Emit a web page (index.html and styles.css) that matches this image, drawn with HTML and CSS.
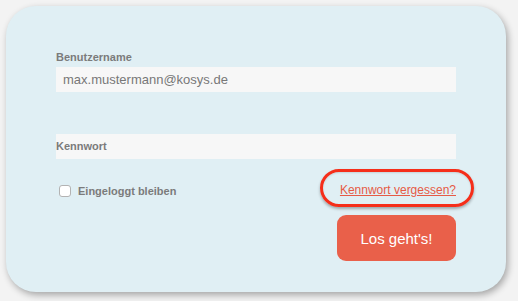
FILE: index.html
```html
<!DOCTYPE html>
<html lang="de">

<head>
    <meta charset="UTF-8">
    <meta name="viewport" content="width=device-width, initial-scale=1.0">
    <title>Anmelden</title>
    <link rel="stylesheet" href="styles.css">
</head>

<body>
    <!-- Login-Karte -->
    <form class="login-card" onsubmit="return false;">
        <div class="field">
            <label class="field-label" for="user">Benutzername</label>
            <input class="field-input" id="user" type="text" value="max.mustermann@kosys.de">
        </div>

        <div class="field field-inline">
            <label class="field-label" for="pass">Kennwort</label>
            <input class="field-input" id="pass" type="password">
        </div>

        <div class="options-row">
            <label class="remember">
                <input class="remember-box" type="checkbox">
                <span>Eingeloggt bleiben</span>
            </label>
            <a class="forgot-link" href="#">Kennwort vergessen?</a>
        </div>

        <div class="submit-row">
            <button class="submit-btn" type="submit">Los geht's!</button>
        </div>
    </form>
</body>

</html>
```

FILE: styles.css
```css
body {
    margin: 0;
    background-color: #f3f3f3;
    font-family: "Liberation Sans", Arial, sans-serif;
    height: 100vh;
    overflow: hidden;
}

.login-card {
    box-sizing: border-box;
    width: 500px;
    height: 286px;
    margin: 6px;
    padding: 44px 50px 0;
    background-color: #e0eff4;
    border-radius: 30px;
    box-shadow: 2px 3px 7px rgba(0, 0, 0, 0.32);
}

.field {
    display: flex;
    flex-direction: column;
    position: relative;
}

.field-label {
    font-size: 11px;
    line-height: 14px;
    font-weight: bold;
    color: #7b7b7b;
    margin-bottom: 3px;
}

.field-input {
    box-sizing: border-box;
    height: 25px;
    border: none;
    outline: none;
    padding: 0 7px;
    background-color: #f7f7f7;
    font-family: inherit;
    font-size: 13px;
    color: #777;
}

/* Kennwort: Label liegt im Eingabefeld */
.field-inline {
    margin-top: 42px;
}

.field-inline .field-label {
    position: absolute;
    left: 0;
    top: 5px;
    margin: 0;
    z-index: 1;
}

.options-row {
    display: flex;
    justify-content: space-between;
    align-items: center;
    height: 38px;
    margin-top: 11px;
}

.remember {
    display: flex;
    align-items: center;
    gap: 7px;
    margin-top: 3px;
    padding-left: 3px;
    font-size: 11px;
    font-weight: bold;
    color: #7b7b7b;
}

.remember-box {
    appearance: none;
    margin: 0;
    width: 12px;
    height: 12px;
    background-color: #fff;
    border: 1px solid #b3b3b3;
    border-radius: 3px;
}

.forgot-link {
    position: relative;
    font-size: 12px;
    line-height: 14px;
    color: #e65a45;
    margin-top: 2px;
}

/* rote Markierung um den Link */
.forgot-link::after {
    content: "";
    position: absolute;
    top: -14px;
    bottom: -10px;
    left: -20px;
    right: -18px;
    border: 3.5px solid #f52e1a;
    border-radius: 20px;
    box-shadow: 0 2px 3px rgba(0, 0, 0, 0.3), inset 0 1px 2px rgba(0, 0, 0, 0.12);
    pointer-events: none;
}

.submit-row {
    display: flex;
    justify-content: flex-end;
    margin-top: 7px;
}

.submit-btn {
    width: 119px;
    height: 46px;
    border: none;
    border-radius: 9px;
    background-color: #e9604a;
    color: #fff;
    font-family: inherit;
    font-size: 15px;
    cursor: pointer;
}
```
